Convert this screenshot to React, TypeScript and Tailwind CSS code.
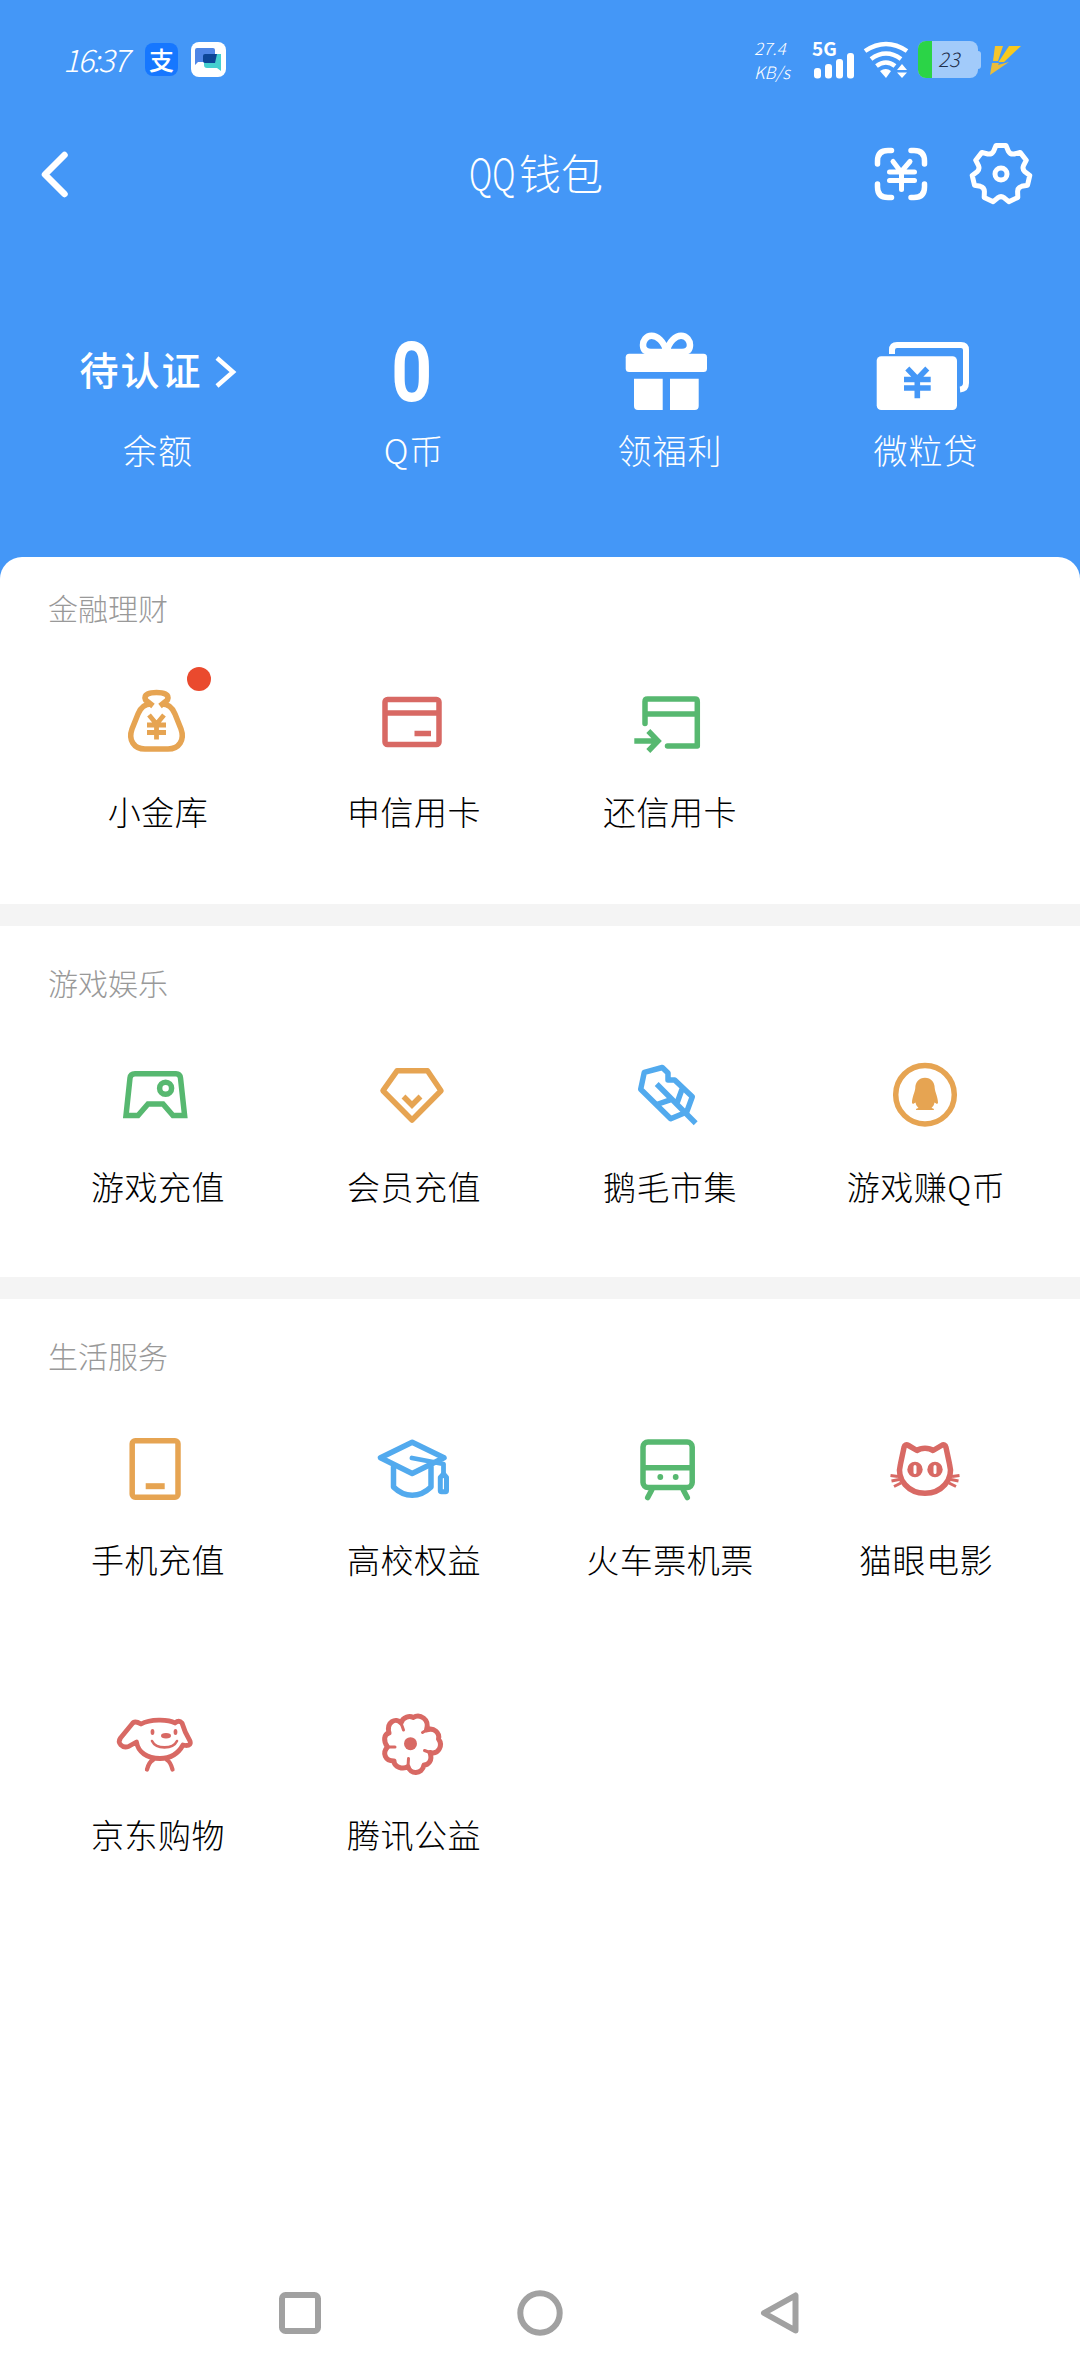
import type { ReactNode } from "react";

type Item = {
  label: string;
  icon: ReactNode;
  dot?: boolean;
};

const ORANGE = "#e6a452";
const RED = "#d86964";
const GREEN = "#57b870";
const BLUE = "#52aaee";

const Icon = ({ color, children }: { color: string; children: ReactNode }) => (
  <svg
    className="h-24 w-24"
    viewBox="0 0 96 96"
    fill="none"
    stroke={color}
    strokeWidth={5.5}
  >
    {children}
  </svg>
);

const finance: Item[] = [
  {
    label: "小金库",
    dot: true,
    icon: (
      <Icon color={ORANGE}>
        <path d="M43 32C36 32 32 37 30 42L24 57C20 68 26 77 37 77H60C71 77 77 68 73 57L67 42C65 37 61 32 54 32" />
        <path d="M45 34L37.5 28C35 22 42 20.5 48.5 20.5S62 22 59.5 28L52 34" strokeLinejoin="round" />
        <path d="M41 43L48.5 52L56 43M39 53H58M39 60.5H58M48.5 52V67.5" strokeWidth={4.8} />
      </Icon>
    ),
  },
  {
    label: "申信用卡",
    icon: (
      <Icon color={RED}>
        <rect x="21" y="27.5" width="54" height="45" rx="2.5" />
        <path d="M21 41H75M50.5 61.5H67" />
      </Icon>
    ),
  },
  {
    label: "还信用卡",
    icon: (
      <Icon color={GREEN}>
        <path d="M25 51.5V29.5Q25 27 27.5 27H75Q77.3 27 77.3 29.5V74H47.5" strokeLinecap="round" strokeLinejoin="round" />
        <path d="M25 42H77M14.3 69H37M28.3 59L38 69L28.3 79" />
      </Icon>
    ),
  },
];

const games: Item[] = [
  {
    label: "游戏充值",
    icon: (
      <Icon color={GREEN}>
        <path d="M18 68.5L22 31Q22.5 26.7 27 26.7H68Q72 26.7 72.5 31L76.6 68.5H65L55 57H40L30 68.5Z" />
        <circle cx="57.6" cy="41.3" r="6" />
      </Icon>
    ),
  },
  {
    label: "会员充值",
    icon: (
      <Icon color={ORANGE}>
        <path d="M33 23.8H63.5L77 43.7L48 73L19 43.7Z" strokeLinejoin="round" />
        <path d="M39.5 49.5L48 58L56.5 49.5" />
      </Icon>
    ),
  },
  {
    label: "鹅毛市集",
    icon: (
      <Icon color={BLUE}>
        <path d="M24.3 25.3L42.3 20.5L48 26V33H54.7L72.3 49.7L66.7 65L50.7 71.8L20.7 42.3Z" strokeLinejoin="round" />
        <path d="M36.7 37L75.7 76.3M36.7 57.5L51.7 52.3M56.7 57L62 42.3" />
      </Icon>
    ),
  },
  {
    label: "游戏赚Q币",
    icon: (
      <Icon color={ORANGE}>
        <circle cx="49" cy="47.7" r="29.3" />
        <path
          d="M49 30.7C43 30.7 39.3 35 39.3 41C39 45 36 50 36 56L37 57L39.5 55.5C40 58 41 59.5 42.5 61C40 61.5 39 63 41 63H57C59 63 58 61.5 55.5 61C57 59.5 58 58 58.5 55.5L61 57L62 56C62 50 59 45 58.7 41C58.7 35 55 30.7 49 30.7Z"
          fill={ORANGE}
          stroke="none"
        />
      </Icon>
    ),
  },
];

const life: Item[] = [
  {
    label: "手机充值",
    icon: (
      <Icon color={ORANGE}>
        <rect x="24.2" y="20.7" width="45.8" height="56.5" rx="3" />
        <path d="M37.7 66.2H56.7" strokeWidth={6} />
      </Icon>
    ),
  },
  {
    label: "高校权益",
    icon: (
      <Icon color={BLUE}>
        <g strokeLinecap="round" strokeLinejoin="round">
          <path d="M48.2 22.3L16.5 37.7L48.2 53.5L80 37.7Z" />
          <path d="M48 38L79.5 44V53" strokeWidth={4.8} />
          <path d="M29.5 47V67Q38 75.3 48.2 75.3T67 67V47" />
          <path d="M79.5 54L82.5 57.5V70.5Q82.5 71.8 81.5 71.8H77.5Q76.3 71.8 76.3 70.5V57.5Z" strokeWidth={5} />
        </g>
      </Icon>
    ),
  },
  {
    label: "火车票机票",
    icon: (
      <Icon color={GREEN}>
        <rect x="23" y="22" width="49.2" height="45.5" rx="5" />
        <path d="M23 47.7H72" />
        <path d="M31.7 70L27.7 77.5M63.3 70L67.3 77.5" strokeLinecap="round" />
        <circle cx="40.3" cy="57" r="2.9" fill={GREEN} stroke="none" />
        <circle cx="55.7" cy="57" r="2.9" fill={GREEN} stroke="none" />
      </Icon>
    ),
  },
  {
    label: "猫眼电影",
    icon: (
      <Icon color={RED}>
        <path
          d="M41 30.5C45 27.5 53 27.5 57 30.5L65.5 25.5Q69 23.5 70 27.5L73.5 44C78 60 65 73.3 49 73.3S20 60 24.5 44L28 27.5Q29 23.5 32.5 25.5Z"
          strokeLinejoin="round"
        />
        <path d="M14.5 55.5L22 56.5M15.5 61L23 59.5M18 66.5L25 63M83.5 55.5L76 56.5M82.5 61L75 59.5M80 66.5L73 63" strokeWidth={3} />
        <circle cx="39" cy="49.5" r="7.7" fill={RED} stroke="none" />
        <circle cx="59" cy="49.5" r="7.7" fill={RED} stroke="none" />
        <path d="M39 46.5V52.5M59 46.5V52.5" stroke="#fff" strokeWidth={3} strokeLinecap="round" />
      </Icon>
    ),
  },
  {
    label: "京东购物",
    icon: (
      <Icon color={RED}>
        <g strokeLinecap="round" strokeLinejoin="round" strokeWidth={4.8}>
          <path d="M33 29C42 24 60 24 67 28Q71 24.5 74 28C76 35 79 41 82 46Q83.5 50.5 78 50.5L75 50C70 59 62 63.5 52 63.5C39 63.5 30 57 28.5 47L20.5 51.5C14 53.5 9 48 12.5 43L24 29Q26.5 25 33 29Z" />
          <path d="M45 65Q41 67 39 74.5M59 65Q62.5 67 64.5 74.5" strokeWidth={4.3} />
          <path d="M44 46C48 54.5 65 54.5 69 46" strokeWidth={2.6} />
        </g>
        <ellipse cx="44.5" cy="37" rx="1.9" ry="3" fill={RED} stroke="none" />
        <ellipse cx="67.5" cy="37" rx="1.9" ry="3" fill={RED} stroke="none" />
        <ellipse cx="58" cy="40.7" rx="5" ry="2.7" fill={RED} stroke="none" />
      </Icon>
    ),
  },
  {
    label: "腾讯公益",
    icon: (
      <Icon color={RED}>
        <path
          d="M37 28C39 21.5 46 20.5 49 22.5C56 18.5 66 24 62.5 35C70 32 76 38 74.5 44C79 50 75 60 66 57.5C69 66 64 70 60 70C58 80 46 79.5 44 71.5C39 75 30 72 30 66C21 66 18 58 23.5 52C19 46 20 39 25 38C22 27 32 22 37 28Z"
          strokeLinejoin="round"
          strokeWidth={5}
        />
        <path d="M37 28L39.5 35M62.5 35L58.5 37.5M66 57.5L60.5 55.5M44 71.5L44.5 63.5M23.5 52L31 52" strokeWidth={3} strokeLinecap="round" />
        <circle cx="46.5" cy="48.7" r="6.5" fill={RED} stroke="none" />
      </Icon>
    ),
  },
];

// Outline of the settings cog, seven teeth starting at twelve o'clock
const point = (deg: number, r: number) => {
  const a = ((deg - 90) * Math.PI) / 180;
  return `${(34 + r * Math.cos(a)).toFixed(1)} ${(34 + r * Math.sin(a)).toFixed(1)}`;
};

const cogPath =
  Array.from({ length: 7 }, (_, i) => {
    const a = (i * 360) / 7;
    return `${i === 0 ? "M" : "L"}${point(a - 10, 28.8)}L${point(a + 10, 28.8)}L${point(a + 18, 24)}Q${point(a + 25.7, 21.5)} ${point(a + 33.4, 24)}`;
  }).join("") + "Z";

const StatusBar = () => (
  <div className="flex h-[119px] items-center pl-[63px] text-white">
    <span className="w-[82px] text-[31px] font-light italic tracking-[-2px]">
      16:37
    </span>
    <span className="flex h-[33px] w-[33px] items-center justify-center rounded-lg bg-[#1677ff] text-[25px] leading-none font-medium">
      支
    </span>
    <svg className="ml-[13px] h-[35px] w-[35px]" viewBox="0 0 35 35">
      <rect width="35" height="35" rx="8" fill="#fff" />
      <path d="M4 8Q4 6 6 6H22Q24 6 24 8V20H7L4 23Z" fill="#4f86e6" />
      <path d="M13 14Q13 12 15 12H30V29L26 26H16Q13 26 13 23Z" fill="#45d0cf" />
      <path d="M12 14Q12 12 14 12H26L24 21H14Q12 21 12 19Z" fill="#0c4596" />
    </svg>

    <div className="ml-[528px] w-[58px] text-[17px] leading-[24px] font-light italic">
      <p>27.4</p>
      <p>KB/s</p>
    </div>

    <div className="h-[38px] w-[51px] flex-none">
      <p className="h-[12px] text-[19px] leading-[14px] font-bold">5G</p>
      <svg className="h-[26px] w-[44px]" viewBox="0 0 44 26" fill="#fff">
        <rect x="2" y="15" width="7" height="10.5" rx="3" />
        <rect x="13" y="11" width="7" height="14.5" rx="3" />
        <rect x="24" y="6" width="7" height="19.5" rx="3" />
        <rect x="35" y="0" width="7" height="25.5" rx="3" />
      </svg>
    </div>

    <svg className="h-[38px] w-[46px] flex-none" viewBox="0 0 46 38" fill="none" stroke="#fff" strokeWidth={4.5}>
      <path d="M2 10Q23 -4 44 10M8 18Q23 7 38 18M13.5 25Q23 18 32 25" />
      <path d="M17 30Q23 26 28 30L23 37Z" fill="#fff" stroke="none" />
      <path d="M39 23L44 29H34ZM39 37L34 31.5H44Z" fill="#fff" stroke="none" />
    </svg>

    <div className="ml-[9px] flex h-[37px] w-[60px] flex-none overflow-hidden rounded-[8px] bg-[#a2cbfa]">
      <div className="w-[14px] bg-[#2bd447]" />
      <span className="flex-1 pl-1.5 text-[20px] leading-[36px] font-light italic text-[#1f2f4a]">
        23
      </span>
    </div>
    <div className="h-[18px] w-[3px] flex-none rounded-r bg-[#a2cbfa]" />
    <svg className="ml-[9px] h-[30px] w-[31px] flex-none" viewBox="0 0 31 30">
      <path d="M5 1H13L8 16H3Z" fill="#f5c52c" />
      <path d="M19 1H31L14 17H8.500Z" fill="#f8c91f" />
      <path d="M2 18H9L8 20L19 17L0 30Z" fill="#e9bd3c" />
    </svg>
  </div>
);

const TitleBar = () => (
  <div className="flex h-[109px] items-center text-white">
    <svg className="ml-[40px] h-[48px] w-[30px]" viewBox="0 0 30 48" fill="none" stroke="#fff" strokeWidth={6.5} strokeLinecap="round" strokeLinejoin="round">
      <path d="M24.5 5L5 24.5L24.5 44" />
    </svg>
    <h1 className="ml-[399px] w-[140px] -translate-y-0.5 whitespace-nowrap text-[42px] leading-none font-light">
      <span className="inline-block w-[50px]">
        <span className="inline-block origin-left scale-x-[0.76]">QQ</span>
      </span>
      钱包
    </h1>
    <svg className="ml-[264px] h-[56px] w-[56px]" viewBox="0 0 56 56" fill="none" stroke="#fff" strokeWidth={5.5} strokeLinecap="round">
      <path d="M4.5 18V15Q4.5 4.5 15 4.5H18.5M38 4.5H41Q51.5 4.5 51.5 15V18M51.5 38V41Q51.5 51.5 41 51.5H38M18.5 51.5H15Q4.5 51.5 4.5 41V38" />
      <path d="M20 15.5L28 26L37 15.5M16.5 26H41.5M16.5 34.5H41.5M28.5 26V43.5" strokeWidth={5} />
    </svg>
    <svg className="ml-[38px] h-[68px] w-[68px]" viewBox="0 0 68 68" fill="none" stroke="#fff" strokeWidth={5}>
      <path d={cogPath} strokeLinejoin="round" />
      <circle cx="34" cy="34" r="6" />
    </svg>
  </div>
);

const GiftIcon = () => (
  <svg className="h-[88px] w-24" viewBox="0 0 96 88" fill="#fff">
    <path
      d="M46.5 24C44 13 37 7.8 31.5 7.8C26 7.8 23 13 23 17C23 22 26 24 31 24ZM46.5 24C49 13 56 7.8 61 7.8C67 7.8 70 13 70 17C70 22 67 24 62 24Z"
      fill="none"
      stroke="#fff"
      strokeWidth={6.5}
      strokeLinejoin="round"
    />
    <rect x="5.7" y="25.7" width="81.3" height="18.3" rx="3.5" />
    <path d="M14 50.7H42.7V82H18Q14 82 14 78ZM50 50.7H78.7V78Q78.7 82 74.7 82H50Z" />
  </svg>
);

const LoanIcon = () => (
  <svg className="h-[88px] w-24" viewBox="0 0 96 88" fill="none">
    <path d="M16 26V22Q16 17 21 17H85Q90 17 90 22V55Q90 61 84 61.5" stroke="#fff" strokeWidth={6} />
    <rect x="0.7" y="28.3" width="80.3" height="53.7" rx="4.5" fill="#fff" />
    <path d="M31.3 40.5L41.3 51L51.3 40.5M28 51.5H54.7M28 60H54.7M41.3 51V70.3" stroke="#4497f7" strokeWidth={5.6} />
  </svg>
);

const Account = ({ label, children }: { label: string; children: ReactNode }) => (
  <div className="flex flex-col items-center">
    <div className="flex h-[88px] items-center justify-center">{children}</div>
    <p className="mt-[14px] h-[40px] whitespace-nowrap pl-1 text-[34px] leading-[40px] font-light tracking-[1px]">
      {label}
    </p>
  </div>
);

const Accounts = () => (
  <div className="grid grid-cols-4 px-7 pt-[100px] text-white">
    <Account label="余额">
      <span className="-translate-y-1 whitespace-nowrap pl-1 text-[39px] font-medium tracking-[2px]">待认证</span>
      <svg className="ml-[12px] h-[34px] w-[22px] flex-none" viewBox="0 0 22 34" fill="none" stroke="#fff" strokeWidth={4.5}>
        <path d="M2 3L18 17L2 31" />
      </svg>
    </Account>
    <Account label="Q币">
      <span className="inline-block scale-x-[0.86] font-['Roboto'] text-[83px] leading-none font-bold">0</span>
    </Account>
    <Account label="领福利">
      <GiftIcon />
    </Account>
    <Account label="微粒贷">
      <LoanIcon />
    </Account>
  </div>
);

const Section = ({ title, items, className }: { title: string; items: Item[]; className: string }) => (
  <section className={`bg-white ${className}`}>
    <h2 className="pl-[48px] text-[30px] leading-[40px] font-light text-[#999]">
      {title}
    </h2>
    <div className="mt-[45px] grid grid-cols-4 gap-y-[87px] px-7">
      {items.map((item) => (
        <div key={item.label} className="flex flex-col items-center">
          <div className="relative">
            {item.icon}
            {item.dot && (
              <span className="absolute -top-[5px] left-[79px] h-6 w-6 rounded-full bg-[#ea4a2e]" />
            )}
          </div>
          <p className="mt-[23px] h-[69px] whitespace-nowrap pl-1 text-[33px] leading-[40px] font-light tracking-[0.5px] text-black">
            {item.label}
          </p>
        </div>
      ))}
    </div>
  </section>
);

const NavBar = () => (
  <nav className="mt-auto flex h-[126px] items-center justify-center gap-[192px]">
    <svg className="h-12 w-12" viewBox="0 0 48 48" fill="none" stroke="#a1a1a1" strokeWidth={6}>
      <rect x="6" y="6" width="36" height="36" rx="3.5" />
    </svg>
    <svg className="h-12 w-12" viewBox="0 0 48 48" fill="none" stroke="#a1a1a1" strokeWidth={6}>
      <circle cx="24" cy="24" r="19.7" />
    </svg>
    <svg className="h-12 w-12" viewBox="0 0 48 48" fill="none" stroke="#a1a1a1" strokeWidth={6} strokeLinejoin="round">
      <path d="M39.5 6.5V41.5L8 24Z" />
    </svg>
  </nav>
);

const App = () => {
  return (
    <main className="flex h-[2376px] w-[1080px] flex-col overflow-hidden bg-white font-['Noto_Sans_CJK_SC',sans-serif]">
      <header className="h-[557px] flex-none bg-[#4497f7]">
        <StatusBar />
        <TitleBar />
        <Accounts />
      </header>
      <div className="flex-none bg-[#4497f7]">
        <Section title="金融理财" items={finance} className="h-[347px] rounded-t-[22px] pt-[30px]" />
      </div>
      <div className="h-[22px] flex-none bg-[#f4f4f4]" />
      <Section title="游戏娱乐" items={games} className="h-[351px] pt-[36px]" />
      <div className="h-[22px] flex-none bg-[#f4f4f4]" />
      <Section title="生活服务" items={life} className="pt-[36px]" />
      <NavBar />
    </main>
  );
};

export default App;
